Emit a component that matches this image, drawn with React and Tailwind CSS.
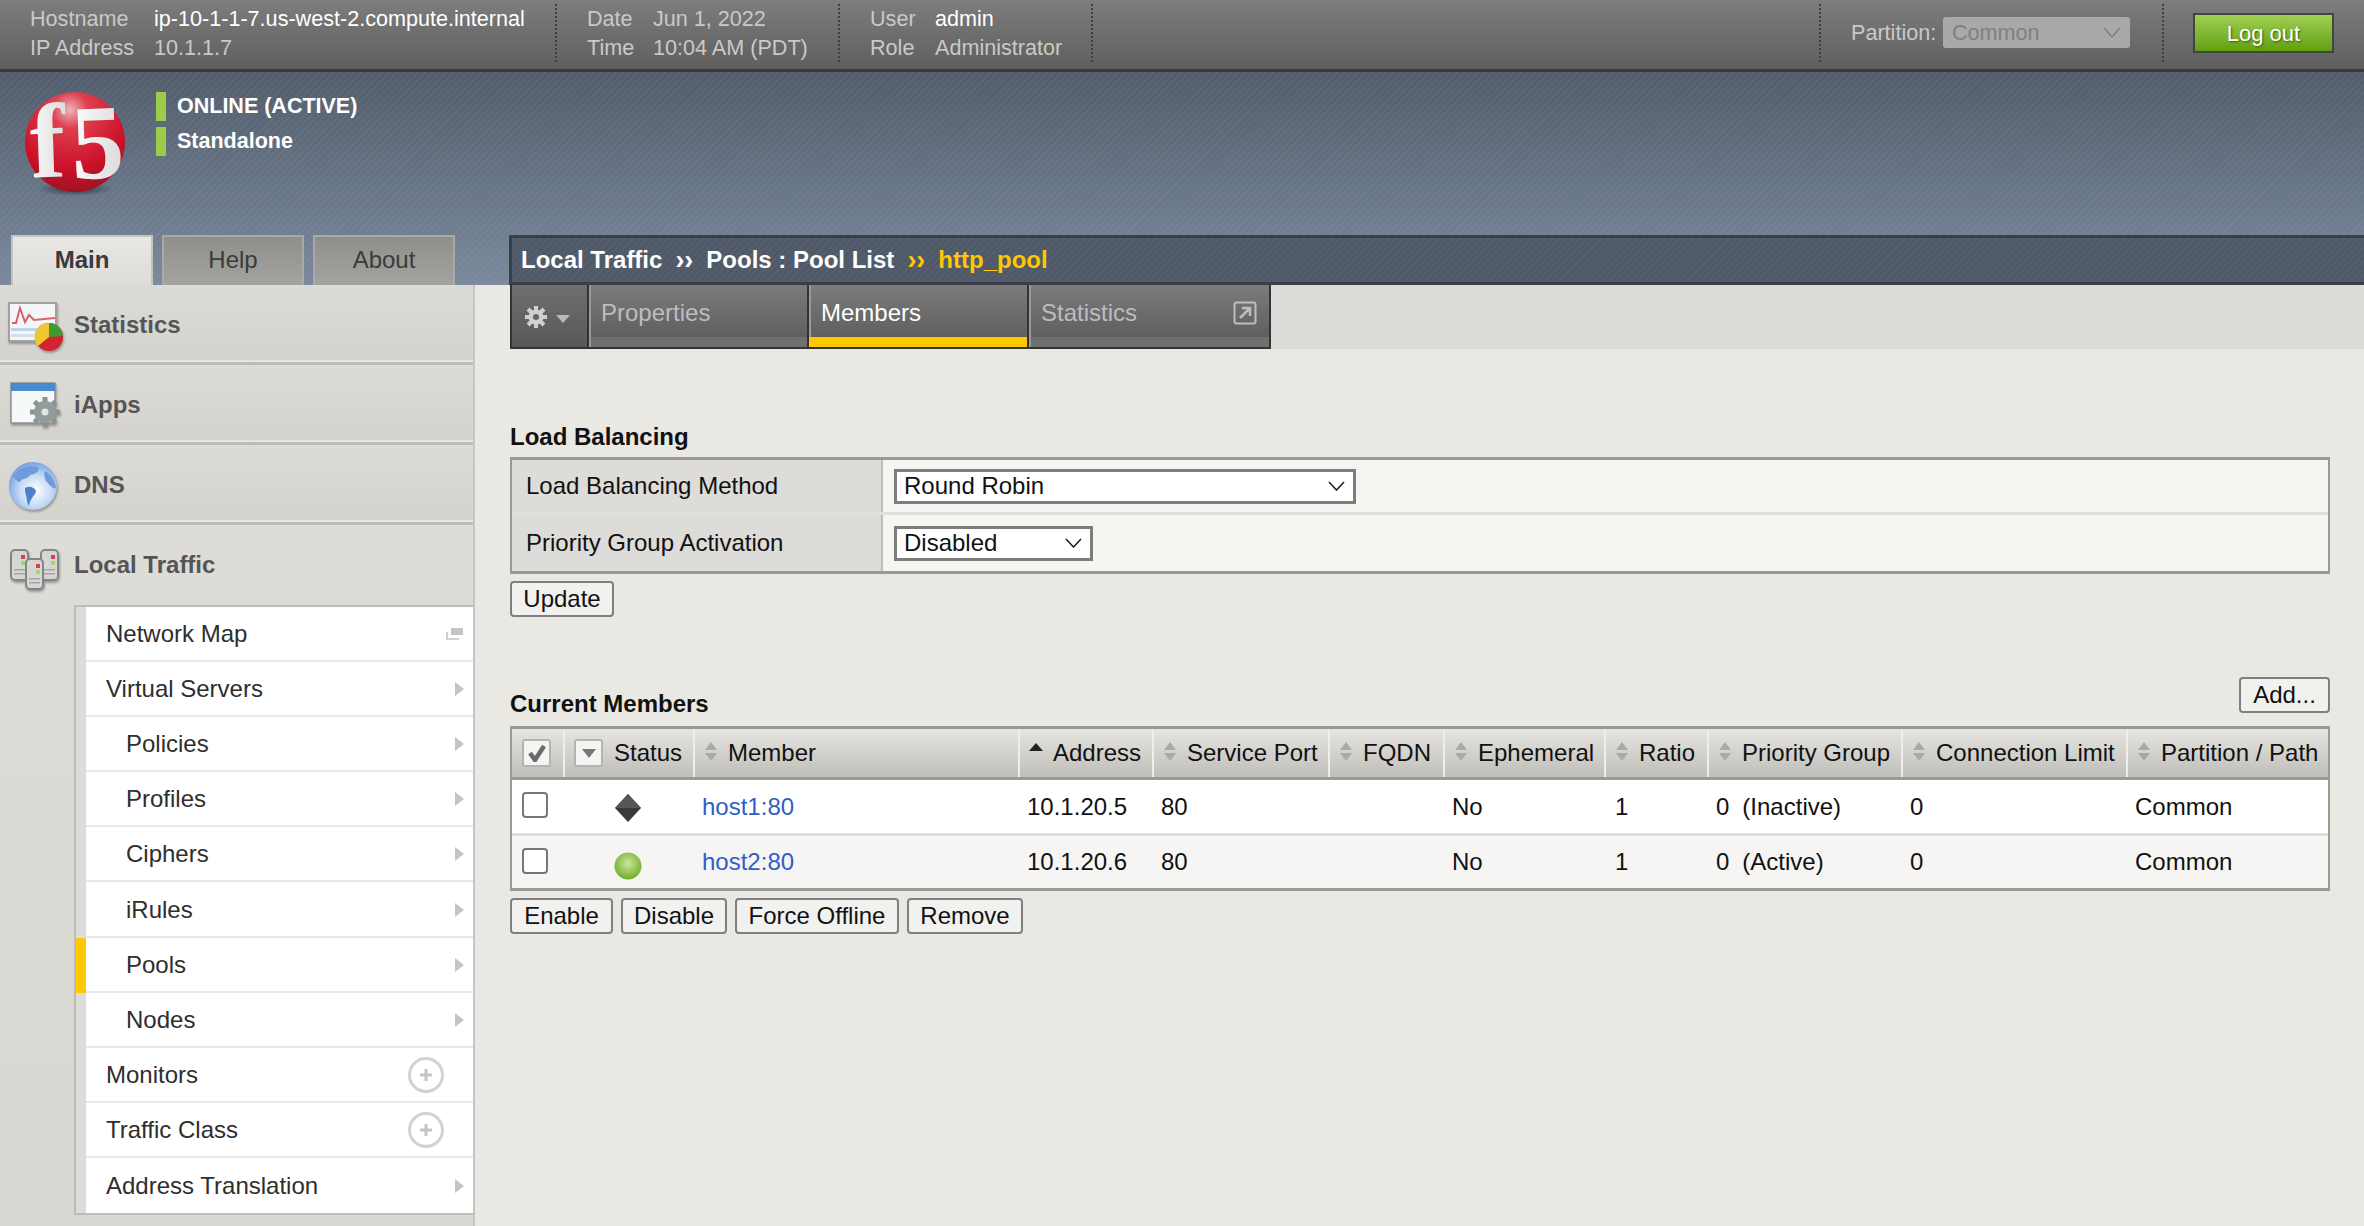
import React from "react";

const FONT = "font-['Liberation_Sans',Arial,sans-serif]";
const GRID = "grid grid-cols-[51px_130px_325px_134px_176px_115px_161px_103px_194px_225px_1fr]";

function Sep({ className = "" }) {
  return <div className={"h-[58px] w-0 shrink-0 border-l-2 border-dotted border-[#3f3f3f] " + className} />;
}

function Logo() {
  return (
    <svg width="104" height="122" viewBox="0 -16 104 122" className="mt-[-16px] shrink-0 blur-[0.5px]">
      <defs>
        <radialGradient id="ball" cx="0.45" cy="0.18" r="0.9">
          <stop offset="0" stopColor="#ecb4b8" />
          <stop offset="0.2" stopColor="#de3f4e" />
          <stop offset="0.65" stopColor="#cc1029" />
          <stop offset="1" stopColor="#8f1522" />
        </radialGradient>
        <radialGradient id="shade" cx="0.5" cy="0.5" r="0.5">
          <stop offset="0" stopColor="#1f2a35" stopOpacity="0.8" />
          <stop offset="1" stopColor="#1f2a35" stopOpacity="0" />
        </radialGradient>
        <linearGradient id="ink" x1="0" y1="0" x2="1" y2="0.2">
          <stop offset="0" stopColor="#ffffff" />
          <stop offset="1" stopColor="#dcdcdc" />
        </linearGradient>
      </defs>
      <ellipse cx="51" cy="97" rx="38" ry="7" fill="url(#shade)" />
      <circle cx="51" cy="50" r="50" fill="url(#ball)" />
      <g fontFamily="'Liberation Serif',serif" fontWeight="700" fontSize="106" fill="url(#ink)">
        <text x="6" y="84" transform="rotate(-2 50 50)">f</text>
        <text x="47" y="87" transform="rotate(-2 50 50)">5</text>
      </g>
    </svg>
  );
}

function Tab({ label, active }) {
  return (
    <div className={"flex h-[50px] w-[142px] items-center justify-center border-x-2 border-t-2 text-[24px] pb-[3px] " + (active ? "border-[#c4c3bf] bg-linear-to-b from-[#e8e7e3] to-[#dddcd8] font-bold text-[#3a3a3a]" : "border-[#a9a9a5] bg-linear-to-b from-[#8f908c] to-[#a3a4a0] text-[#3b3b3b]")}>
      {label}
    </div>
  );
}

function StatsIcon() {
  return (
    <svg width="56" height="50" viewBox="0 0 56 50" className="shrink-0 blur-[0.6px] drop-shadow-[1px_2px_1px_rgba(0,0,0,0.3)]">
      <rect x="1" y="1" width="47" height="38" fill="#f4f5f7" stroke="#a0a0a0" strokeWidth="2" />
      <rect x="3" y="26" width="34" height="3" fill="#bcd3ea" />
      <rect x="3" y="32" width="30" height="3" fill="#d6dfe8" />
      <path d="M4 21 L8 21 L12 6 L17 20 L21 13 L26 18 L47 16" fill="none" stroke="#d9626a" strokeWidth="2" />
      <circle cx="41" cy="35" r="14" fill="#d2232f" />
      <path d="M41 35 L41 21 A14 14 0 0 1 55 34 Z" fill="#3e9b33" />
      <path d="M41 35 L41 21 A14 14 0 0 0 30 44 Z" fill="#edc72e" />
    </svg>
  );
}
function AppsIcon() {
  return (
    <svg width="56" height="50" viewBox="0 0 56 50" className="shrink-0 blur-[0.6px] drop-shadow-[1px_2px_1px_rgba(0,0,0,0.3)]">
      <rect x="3" y="1" width="44" height="40" fill="#f7f8fa" stroke="#8f8f8f" strokeWidth="1.5" />
      <rect x="3" y="1" width="44" height="8" fill="#4a8ad0" />
      <g stroke="#8a9593" strokeWidth="5">
        <path d="M37 15 V45" /><path d="M22 30 H52" /><path d="M26.5 19.5 L47.5 40.5" /><path d="M47.5 19.5 L26.5 40.5" />
      </g>
      <circle cx="37" cy="30" r="11" fill="#929c9a" />
      <circle cx="37" cy="30" r="3.5" fill="#e3e5e5" />
    </svg>
  );
}
function GlobeIcon() {
  return (
    <svg width="56" height="50" viewBox="0 0 56 50" className="shrink-0 blur-[0.5px] drop-shadow-[1px_2px_1px_rgba(0,0,0,0.3)]">
      <defs>
        <radialGradient id="gl" cx="0.55" cy="0.6" r="0.62">
          <stop offset="0" stopColor="#ffffff" />
          <stop offset="0.55" stopColor="#c4d8f5" />
          <stop offset="1" stopColor="#6f9fe0" />
        </radialGradient>
      </defs>
      <circle cx="25" cy="24" r="24" fill="url(#gl)" />
      <path d="M5 14 C12 4 22 3 30 5 C33 9 26 13 22 13 C20 18 14 15 12 20 C9 20 8 18 5 14 Z" fill="#6f9bdc" />
      <path d="M17 26 C22 23 28 26 28 30 C26 34 22 37 21 44 C18 39 19 34 17 30 Z" fill="#4f80cb" />
      <path d="M37 9 C43 12 47 19 48 26 C44 27 41 22 38 19 C36 15 36 12 37 9 Z" fill="#6f9bdc" />
    </svg>
  );
}
function ServersIcon() {
  return (
    <svg width="56" height="50" viewBox="0 0 56 50" className="shrink-0 blur-[0.6px] drop-shadow-[1px_2px_1px_rgba(0,0,0,0.3)]">
      {[[3, 8, 30], [33, 8, 30], [18, 17, 30]].map(([x, y, h], i) => (
        <g key={i}>
          <rect x={x} y={y} width="17" height={h} rx="4" fill="#d6d6d4" stroke="#858585" strokeWidth="2" />
          <rect x={x + 10} y={y + 5} width="4" height="4" fill="#d8434a" />
          <rect x={x + 10} y={y + 11} width="4" height="4" fill="#9fd86a" />
          <rect x={x + 3} y={y + 19} width="11" height="1.5" fill="#a5a5a5" />
          <rect x={x + 3} y={y + 23} width="11" height="1.5" fill="#a5a5a5" />
        </g>
      ))}
    </svg>
  );
}

function NavHead({ icon, label, last }) {
  return (
    <div className={"flex items-center gap-[10px] pl-[8px] font-bold text-[24px] text-[#555] " + (last ? "h-[80px]" : "h-[80px] border-b-[3px] border-[#bdbcb8] bg-linear-to-b from-[#dcdbd7] to-[#d3d2cd] pt-[3px] shadow-[inset_0_-2px_0_#e6e5e1]")}>
      <span className="mt-[3px] flex w-[56px] shrink-0 items-center">{icon}</span>
      <span>{label}</span>
    </div>
  );
}

function SubItem({ label, indent, mark, selected, last }) {
  return (
    <div className="flex h-[55.1px]">
      <div className={"w-[10px] shrink-0 " + (selected ? "bg-[#ffc800]" : "bg-[#dcdcda]")} />
      <div className={"flex flex-1 items-center justify-between bg-white pt-[1px] text-[24px] text-[#2e2e2e] " + (indent ? "pl-[40px]" : "pl-[20px]") + (last ? "" : " border-b-2 border-[#e8e8e6]")}>
        <span>{label}</span>
        {mark === "arrow" && (
          <svg width="9" height="14" viewBox="0 0 9 14" className="mr-[9px]"><path d="M0 0 L9 7 L0 14 Z" fill="#c4c4c4" /></svg>
        )}
        {mark === "map" && (
          <svg width="18" height="12" viewBox="0 0 18 12" className="mr-[9px]"><rect x="5" y="0" width="12" height="7" fill="#c4c4c4" /><path d="M1 4 V11 H13" fill="none" stroke="#c4c4c4" strokeWidth="1.5" /></svg>
        )}
        {mark === "plus" && (
          <svg width="38" height="38" viewBox="0 0 38 38" className="mr-[28px]"><circle cx="19" cy="19" r="16.5" fill="none" stroke="#d2d2d0" strokeWidth="3" /><path d="M19 13 V25 M13 19 H25" stroke="#c4c4c4" strokeWidth="3" /></svg>
        )}
      </div>
    </div>
  );
}

function Sort({ up }) {
  return (
    <svg width="14" height="24" viewBox="0 0 14 24" className="mr-[10px] shrink-0 mb-[3px]">
      {up ? (
        <path d="M0 11 L7 3 L14 11 Z" fill="#222" />
      ) : (
        <>
          <path d="M1 10 L7 2 L13 10 Z" fill="#a9a9a6" />
          <path d="M1 13 L7 21 L13 13 Z" fill="#a9a9a6" />
        </>
      )}
    </svg>
  );
}

function Th({ label, up }) {
  return (
    <div className="flex items-center whitespace-nowrap border-l-2 border-[#eeeeea] pl-[9px]">
      <Sort up={up} />
      <span>{label}</span>
    </div>
  );
}

function Btn({ children, className = "" }) {
  return (
    <button className={"flex h-[36px] items-center justify-center rounded-[4px] border-2 border-[#7f7f7f] bg-[#f1f1ef] text-[24px] text-[#111] " + className}>
      {children}
    </button>
  );
}

function Sel({ label, className = "" }) {
  return (
    <div className={"flex h-[35px] items-center justify-between border-[3px] border-[#7d7d7d] bg-white pl-[7px] pr-[8px] text-[24px] text-[#111] " + className}>
      <span>{label}</span>
      <svg width="17" height="10" viewBox="0 0 17 10"><path d="M1 1 L8.5 9 L16 1" fill="none" stroke="#222" strokeWidth="1.6" /></svg>
    </div>
  );
}

function Row({ host, status, addr, pg, alt }) {
  return (
    <div className={GRID + " text-[24px] text-[#111] " + (alt ? "h-[52px] bg-[#f6f5f3]" : "h-[56px] border-b-[3px] border-[#dededb] bg-white")}>
      <div className="flex items-start pl-[10px] pt-[12px]">
        <span className="block h-[26px] w-[26px] rounded-[4px] border-2 border-[#777] bg-white" />
      </div>
      <div className="flex items-center pl-[51px]">
        {status === "off" ? (
          <svg width="28" height="30" viewBox="0 0 28 30" className="mt-[3px]"><path d="M14 1 L27 15 L14 29 L1 15 Z" fill="#3a3a3a" /><path d="M14 1 L27 15 L14 15 L1 15 Z" fill="#565656" /></svg>
        ) : (
          <svg width="28" height="28" viewBox="0 0 28 28" className="mt-[7px]">
            <defs><radialGradient id="gr" cx="0.5" cy="0.4" r="0.6"><stop offset="0" stopColor="#c9e69a" /><stop offset="1" stopColor="#6fae2b" /></radialGradient></defs>
            <circle cx="14" cy="14" r="13.5" fill="url(#gr)" />
          </svg>
        )}
      </div>
      <div className="flex items-center pl-[9px] text-[#2f5fc4]">{host}</div>
      <div className="flex items-center pl-[9px]">{addr}</div>
      <div className="flex items-center pl-[9px]">80</div>
      <div />
      <div className="flex items-center pl-[9px]">No</div>
      <div className="flex items-center pl-[11px]">1</div>
      <div className="flex items-center gap-[13px] pl-[9px]"><span>0</span><span>{pg}</span></div>
      <div className="flex items-center pl-[9px]">0</div>
      <div className="flex items-center pl-[9px]">Common</div>
    </div>
  );
}

export default function App() {
  return (
    <div className={FONT + " flex h-[1226px] w-[2364px] flex-col overflow-hidden bg-[#e9e8e3]"}>
      {/* top bar */}
      <header className="flex h-[72px] shrink-0 items-start whitespace-nowrap border-b-[3px] border-[#3a3a3a] bg-linear-to-b from-[#7d7d7d] to-[#5f5f5f] pt-[4px] text-[21.6px] leading-[29px] text-[#c9c9c9]">
        <div className="ml-[30px] grid w-[495px] grid-cols-[124px_1fr]">
          <span>Hostname</span><span className="text-white">ip-10-1-1-7.us-west-2.compute.internal</span>
          <span>IP Address</span><span>10.1.1.7</span>
        </div>
        <Sep className="mx-[30px]" />
        <div className="grid w-[221px] grid-cols-[66px_1fr]">
          <span>Date</span><span>Jun 1, 2022</span>
          <span>Time</span><span>10:04 AM (PDT)</span>
        </div>
        <Sep className="mx-[30px]" />
        <div className="grid w-[193px] grid-cols-[65px_1fr]">
          <span>User</span><span className="text-white">admin</span>
          <span>Role</span><span>Administrator</span>
        </div>
        <Sep className="ml-[28px]" />
        <div className="flex-1" />
        <Sep />
        <div className="ml-[30px] mt-[13px] flex w-[279px] items-center justify-between">
          <span>Partition:</span>
          <div className="flex h-[31px] w-[187px] items-center justify-between rounded-[3px] bg-[#a9a9a9] px-[9px] text-[#7f7f7f]">
            <span>Common</span>
            <svg width="18" height="11" viewBox="0 0 18 11"><path d="M1 1 L9 10 L17 1" fill="none" stroke="#7f7f7f" strokeWidth="1.5" /></svg>
          </div>
        </div>
        <Sep className="ml-[32px]" />
        <button className="ml-[29px] mr-[30px] mt-[9px] flex h-[40px] w-[141px] items-center justify-center border-2 border-[#444] bg-linear-to-b from-[#9fd052] to-[#62a007] text-[22px] text-white [text-shadow:1px_1px_2px_#3b5a10]">
          Log out
        </button>
      </header>

      {/* banner */}
      <div className="flex h-[213px] shrink-0 flex-col justify-between bg-[image:repeating-linear-gradient(135deg,rgba(255,255,255,0.035)_0px,rgba(255,255,255,0.035)_2px,transparent_2px,transparent_5px),linear-gradient(#525d6b,#7a899d)] pt-[20px]">
        <div className="flex items-start pl-[24px]">
          <Logo />
          <div className="ml-[28px] flex flex-col gap-[6px] text-[21.5px] font-bold text-white">
            <div className="flex h-[29px] items-center gap-[11px]"><span className="h-[29px] w-[10px] bg-[#9ccc4c]" />ONLINE (ACTIVE)</div>
            <div className="flex h-[29px] items-center gap-[11px]"><span className="h-[29px] w-[10px] bg-[#9ccc4c]" />Standalone</div>
          </div>
        </div>
        <div className="flex items-end">
          <div className="ml-[11px] flex gap-[9px]">
            <Tab label="Main" active />
            <Tab label="Help" />
            <Tab label="About" />
          </div>
          <div className="ml-[54px] flex h-[50px] flex-1 items-center gap-[13px] border-y-[3px] border-l-[3px] border-[#3a3f47] bg-[image:repeating-linear-gradient(135deg,rgba(255,255,255,0.03)_0px,rgba(255,255,255,0.03)_2px,transparent_2px,transparent_5px),linear-gradient(#4f5968,#4f5968)] pl-[9px] text-[24px] font-bold text-white">
            <span>Local Traffic</span>
            <span className="text-[27px] leading-none">››</span>
            <span>Pools : Pool List</span>
            <span className="text-[27px] leading-none text-[#ffc800]">››</span>
            <span className="text-[#ffc800]">http_pool</span>
          </div>
        </div>
      </div>

      {/* body */}
      <div className="flex min-h-0 flex-1">
        <aside className="flex w-[475px] shrink-0 flex-col border-r-2 border-[#c6c5c1] bg-linear-to-b from-[#dfded9] to-[#d8d7d2]">
          <NavHead icon={<StatsIcon />} label="Statistics" />
          <NavHead icon={<AppsIcon />} label="iApps" />
          <NavHead icon={<GlobeIcon />} label="DNS" />
          <NavHead icon={<ServersIcon />} label="Local Traffic" last />
          <div className="ml-[74px] border-y-2 border-l-2 border-[#bdbcb8]">
            <SubItem label="Network Map" mark="map" />
            <SubItem label="Virtual Servers" mark="arrow" />
            <SubItem label="Policies" indent mark="arrow" />
            <SubItem label="Profiles" indent mark="arrow" />
            <SubItem label="Ciphers" indent mark="arrow" />
            <SubItem label="iRules" indent mark="arrow" />
            <SubItem label="Pools" indent mark="arrow" selected />
            <SubItem label="Nodes" indent mark="arrow" />
            <SubItem label="Monitors" mark="plus" />
            <SubItem label="Traffic Class" mark="plus" />
            <SubItem label="Address Translation" mark="arrow" last />
          </div>
        </aside>

        <main className="min-w-0 flex-1">
          {/* tabs */}
          <div className="ml-[35px] bg-[#dddcd8]">
            <div className="flex h-[64px] w-[761px] border-x-2 border-b-2 border-[#333] text-[24px]">
              <div className="flex w-[75px] items-center gap-[8px] bg-linear-to-b from-[#6f6f6f] to-[#585858] pl-[12px]">
                <svg width="24" height="24" viewBox="0 0 24 24" className="mt-[2px]">
                  <g stroke="#cfcfcf" strokeWidth="4"><path d="M12 1 V23" /><path d="M1 12 H23" /><path d="M4 4 L20 20" /><path d="M20 4 L4 20" /></g>
                  <circle cx="12" cy="12" r="7.5" fill="#cfcfcf" /><circle cx="12" cy="12" r="3" fill="#666" />
                </svg>
                <svg width="14" height="8" viewBox="0 0 14 8" className="mt-[6px]"><path d="M0 0 H14 L7 8 Z" fill="#b9b9b9" /></svg>
              </div>
              {[["Properties", "w-[220px]", false], ["Members", "w-[220px]", true], ["Statistics", "flex-1", false]].map(([t, w, on]) => (
                <div key={t} className={"flex flex-col border-l-2 border-[#333] " + w}>
                  <div className={"flex h-[52px] items-center justify-between border-l-2 border-[#999] bg-linear-to-b from-[#7c7c7c] to-[#5f5f5f] pl-[10px] pr-[12px] pt-[3px] " + (on ? "text-white" : "text-[#bdbdbd]")}>
                    <span>{t}</span>
                    {t === "Statistics" && (
                      <svg width="24" height="24" viewBox="0 0 24 24"><rect x="1.5" y="1.5" width="21" height="21" rx="2" fill="none" stroke="#bdbdbd" strokeWidth="2" /><path d="M7 17 L17 7 M9 7 H17 V15" fill="none" stroke="#bdbdbd" strokeWidth="2.5" /></svg>
                    )}
                  </div>
                  <div className={"flex-1 border-l-2 " + (on ? "border-[#ffc800] bg-[#ffc800]" : "border-[#999] bg-[#707070]")} />
                </div>
              ))}
            </div>
          </div>

          <div className="pl-[35px] pr-[34px]">
            <h2 className="mt-[74px] text-[24px] font-bold leading-[28px] text-[#111]">Load Balancing</h2>
            <div className="mt-[6px] border-x-2 border-y-[3px] border-[#999] text-[24px] text-[#111]">
              <div className="flex h-[55px] border-b-[3px] border-[#dededb]">
                <div className="flex w-[371px] items-center border-r-2 border-[#bdbcb8] bg-[#dddcd8] pl-[14px]">Load Balancing Method</div>
                <div className="flex flex-1 items-center bg-[#f6f5f2] pl-[11px]"><Sel label="Round Robin" className="w-[462px]" /></div>
              </div>
              <div className="flex h-[56px]">
                <div className="flex w-[371px] items-center border-r-2 border-[#bdbcb8] bg-[#dddcd8] pl-[14px]">Priority Group Activation</div>
                <div className="flex flex-1 items-center bg-[#f6f5f2] pl-[11px]"><Sel label="Disabled" className="w-[199px]" /></div>
              </div>
            </div>
            <Btn className="mt-[7px] w-[104px]">Update</Btn>

            <div className="mt-[60px] flex h-[49px] items-start justify-between">
              <h2 className="mt-[13px] text-[24px] font-bold leading-[28px] text-[#111]">Current Members</h2>
              <Btn className="w-[91px]">Add...</Btn>
            </div>
            <div className="border-x-2 border-y-[3px] border-[#999] text-[24px] text-[#111]">
              <div className={GRID + " h-[51px] border-b-[3px] border-[#999] bg-linear-to-b from-[#e6e5e1] to-[#bfbeb9]"}>
                <div className="flex items-center pl-[10px]">
                  <span className="flex h-[28px] w-[29px] items-center justify-center rounded-[3px] border-2 border-[#b4b4b0] bg-[#f4f4f2]">
                    <svg width="18" height="18" viewBox="0 0 18 18"><path d="M2 9 L7 16 L16 2" fill="none" stroke="#6b6b6b" strokeWidth="4.5" /></svg>
                  </span>
                </div>
                <div className="flex items-center gap-[11px] border-l-2 border-[#eeeeea] pl-[9px]">
                  <span className="flex h-[28px] w-[29px] items-center justify-center rounded-[3px] border-2 border-[#b4b4b0] bg-[#f4f4f2]">
                    <svg width="14" height="9" viewBox="0 0 14 9"><path d="M0 0 H14 L7 9 Z" fill="#777" /></svg>
                  </span>
                  <span>Status</span>
                </div>
                <Th label="Member" />
                <Th label="Address" up />
                <Th label="Service Port" />
                <Th label="FQDN" />
                <Th label="Ephemeral" />
                <Th label="Ratio" />
                <Th label="Priority Group" />
                <Th label="Connection Limit" />
                <Th label="Partition / Path" />
              </div>
              <Row host="host1:80" status="off" addr="10.1.20.5" pg="(Inactive)" />
              <Row host="host2:80" status="on" addr="10.1.20.6" pg="(Active)" alt />
            </div>
            <div className="mt-[7px] flex gap-[8px]">
              <Btn className="w-[103px]">Enable</Btn>
              <Btn className="w-[106px]">Disable</Btn>
              <Btn className="w-[164px]">Force Offline</Btn>
              <Btn className="w-[116px]">Remove</Btn>
            </div>
          </div>
        </main>
      </div>
    </div>
  );
}
